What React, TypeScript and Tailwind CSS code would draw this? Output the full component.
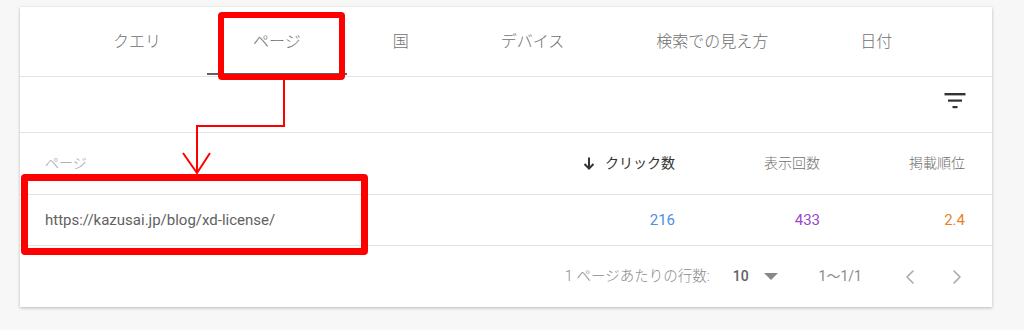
import { ChevronLeft, ChevronRight } from "lucide-react";

const tabs = ["クエリ", "ページ", "国", "デバイス", "検索での見え方", "日付"];

function FilterIcon() {
  return (
    <svg width="22" height="16" viewBox="0 0 22 16" fill="#333">
      <rect x="0.5" y="0" width="21" height="2.4" />
      <rect x="4" y="6.5" width="14" height="2.2" />
      <rect x="8.5" y="13" width="5" height="2.2" />
    </svg>
  );
}

function SortDown() {
  return (
    <svg width="12" height="13" viewBox="0 0 12 13" fill="none" stroke="#333" strokeWidth="2">
      <path d="M6 0.5v11M1.5 7l4.5 4.5L10.5 7" />
    </svg>
  );
}

export default function App() {
  return (
    <div
      className="relative w-full h-[330px] bg-[#f7f7f7] pt-[7px] pl-[20px]"
      style={{ fontFamily: 'Roboto, "Noto Sans CJK JP", sans-serif' }}
    >
      <div className="w-[972px] h-[300px] bg-white shadow-[0_1px_3px_rgba(0,0,0,0.25)] flex flex-col">
        {/* tabs */}
        <div className="h-[70px] border-b border-[#e3e3e3] flex pl-[47px] shrink-0">
          {tabs.map((t) => (
            <div key={t} className="relative px-[46px] flex items-center text-[16px] font-light text-[#6f6f6f]">
              {t}
              {t === "ページ" && (
                <span className="absolute left-0 right-0 bottom-[1px] h-[2px] bg-[#616161]" />
              )}
            </div>
          ))}
        </div>

        {/* filter */}
        <div className="h-[56px] border-b border-[#e3e3e3] flex justify-end pt-[16px] pr-[26px] shrink-0">
          <FilterIcon />
        </div>

        {/* header */}
        <div className="h-[62px] border-b border-[#e3e3e3] flex items-center pr-[27px] text-[14px] shrink-0">
          <div className="flex-1 pl-[25px] text-[#a0a0a0] font-light">ページ</div>
          <div className="w-[145px] flex items-center justify-end gap-[10px] text-[#333]">
            <SortDown />
            クリック数
          </div>
          <div className="w-[145px] text-right text-[#6f6f6f] font-light">表示回数</div>
          <div className="w-[145px] text-right text-[#6f6f6f] font-light">掲載順位</div>
        </div>

        {/* row */}
        <div className="h-[51px] border-b border-[#e3e3e3] flex items-center pr-[27px] text-[15px] shrink-0">
          <div className="flex-1 pl-[25px] text-[#616161]">https://kazusai.jp/blog/xd-license/</div>
          <div className="w-[145px] text-right text-[#4b8fe6]">216</div>
          <div className="w-[145px] text-right text-[#9b45c9]">433</div>
          <div className="w-[145px] text-right text-[#e8822b]">2.4</div>
        </div>

        {/* pagination */}
        <div className="flex-1 flex items-center justify-end pr-[23px] text-[14px] text-[#8a8a8a]">
          <span className="text-[14.5px] font-light">1 ページあたりの行数:</span>
          <span className="ml-[23px] text-[#616161] font-medium">10</span>
          <svg className="ml-[15px]" width="14" height="7" viewBox="0 0 14 7">
            <path d="M0 0h14L7 7z" fill="#888" />
          </svg>
          <span className="ml-[41px]">1〜1/1</span>
          <ChevronLeft className="ml-[36px]" size={24} strokeWidth={1.6} color="#aaa" />
          <ChevronRight className="ml-[23px]" size={24} strokeWidth={1.6} color="#aaa" />
        </div>
      </div>

      {/* red annotations */}
      <div className="absolute left-[218px] top-[12px] w-[127px] h-[68px] border-[6px] border-[#ff0000] rounded-[4px]" />
      <div className="absolute left-[21px] top-[174px] w-[347px] h-[81px] border-[7px] border-[#ff0000] rounded-[4px]" />
      <svg className="absolute left-0 top-0 pointer-events-none" width="1024" height="330">
        <path
          d="M284 80V126H197V173M183 153L197 173L210 153"
          fill="none"
          stroke="#ff0000"
          strokeWidth="2"
        />
      </svg>
    </div>
  );
}
